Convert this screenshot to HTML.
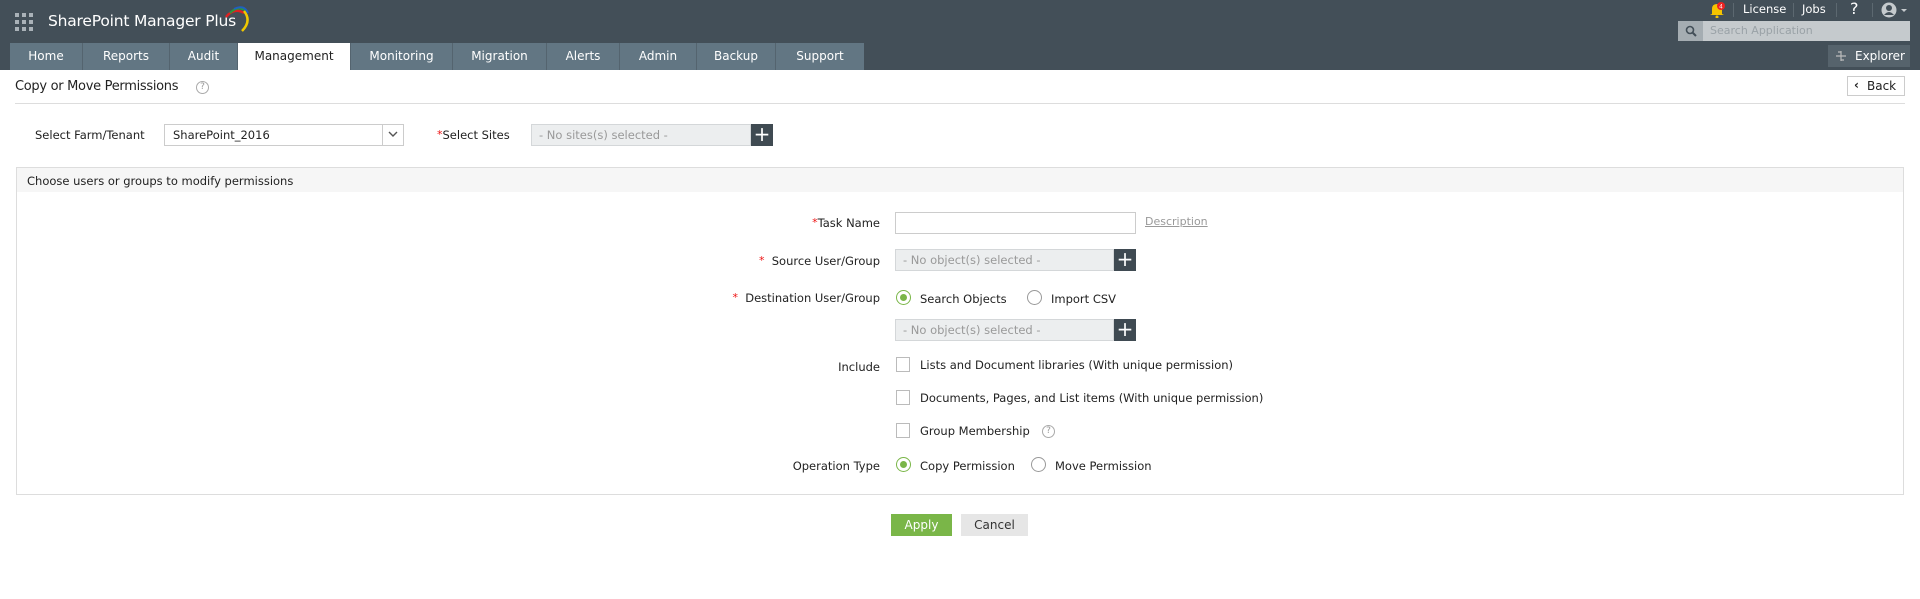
<!DOCTYPE html>
<html><head><meta charset="utf-8"><style>
*{box-sizing:border-box;margin:0;padding:0}
body{width:1920px;height:599px;background:#fff;font-family:"DejaVu Sans","Liberation Sans",sans-serif;font-size:12px;color:#222;position:relative;overflow:hidden}
.a{position:absolute}
.hdr{left:0;top:0;width:1920px;height:70px;background:#434f58}
.tab{position:absolute;top:43px;height:27px;background:#627683;color:#fff;font-size:12px;line-height:27px;text-align:center;border-right:1px solid #54646f}
.tab.act{background:#fff;color:#222}
.lbl{position:absolute;font-size:11.5px;white-space:nowrap}
.r{text-align:right;width:300px}
.star{color:#e11;font-size:11px;vertical-align:top}
.box{position:absolute;height:22px;background:#eceeef;border:1px solid #d4d7d9;color:#999;font-size:11.5px;line-height:20px;padding-left:7px}
.plus{position:absolute;width:22px;height:22px;background:#3f4a52;color:#fff;font-size:20px;line-height:21px;text-align:center}
.radio{position:absolute;width:15px;height:15px;border:1px solid #999;border-radius:50%;background:#fff}
.radio.on{border-color:#7ab648}
.radio.on:after{content:"";position:absolute;left:3px;top:3px;width:7px;height:7px;border-radius:50%;background:#7ab648}
.chk{position:absolute;width:14px;height:15px;border:1px solid #bbb;background:#fff}
.q{position:absolute;width:13px;height:13px;border:1px solid #aaa;border-radius:50%;color:#999;font-size:9px;line-height:11px;text-align:center}
</style></head><body>
<div class="a hdr"></div>
<div class="a" style="left:15px;top:13px;width:18px;height:18px">
<svg width="18" height="18"><g fill="#aab2b8"><rect x="0" y="0" width="4" height="4"/><rect x="7" y="0" width="4" height="4"/><rect x="14" y="0" width="4" height="4"/><rect x="0" y="7" width="4" height="4"/><rect x="7" y="7" width="4" height="4"/><rect x="14" y="7" width="4" height="4"/><rect x="0" y="14" width="4" height="4"/><rect x="7" y="14" width="4" height="4"/><rect x="14" y="14" width="4" height="4"/></g></svg></div>
<div class="a" style="left:48px;top:12px;color:#fff;font-size:15.5px;letter-spacing:-0.2px">SharePoint Manager Plus</div>
<svg class="a" style="left:222px;top:5px" width="30" height="30"><path d="M4 12 Q12 2 22 8" stroke="#d22" stroke-width="2.5" fill="none"/><path d="M8 8 Q16 0 24 6" stroke="#2a9a3a" stroke-width="2" fill="none"/><path d="M12 4 Q22 -1 26 8" stroke="#2060c0" stroke-width="2" fill="none"/><path d="M22 6 Q30 16 20 26" stroke="#f0c800" stroke-width="2.5" fill="none"/></svg>
<div class="tab" style="left:10px;width:73px">Home</div>
<div class="tab" style="left:83px;width:87px">Reports</div>
<div class="tab" style="left:170px;width:68px">Audit</div>
<div class="tab act" style="left:238px;width:113px">Management</div>
<div class="tab" style="left:351px;width:102px">Monitoring</div>
<div class="tab" style="left:453px;width:94px">Migration</div>
<div class="tab" style="left:547px;width:73px">Alerts</div>
<div class="tab" style="left:620px;width:77px">Admin</div>
<div class="tab" style="left:697px;width:79px">Backup</div>
<div class="tab" style="left:776px;width:88px;border:none">Support</div>
<svg class="a" style="left:1709px;top:2px" width="16" height="16"><path d="M3 12 L3 7 Q3 2 8 2 Q13 2 13 7 L13 12 L15 13 L1 13 Z" fill="#f5c400"/><circle cx="8" cy="15" r="1.5" fill="#f5c400"/><circle cx="12" cy="4" r="4" fill="#e22"/><text x="10.2" y="6.5" font-size="6" fill="#fff" font-family="Liberation Sans">4</text></svg>
<div class="a" style="left:1733px;top:3px;width:1px;height:14px;background:#5c6870"></div>
<div class="a" style="left:1743px;top:2px;color:#fff;font-size:11.5px">License</div>
<div class="a" style="left:1793px;top:3px;width:1px;height:14px;background:#5c6870"></div>
<div class="a" style="left:1802px;top:2px;color:#fff;font-size:11.5px">Jobs</div>
<div class="a" style="left:1836px;top:3px;width:1px;height:14px;background:#5c6870"></div>
<div class="a" style="left:1850px;top:-1px;color:#fff;font-size:16px">?</div>
<div class="a" style="left:1872px;top:3px;width:1px;height:14px;background:#5c6870"></div>
<svg class="a" style="left:1881px;top:2px" width="34" height="16"><circle cx="8" cy="8" r="7.5" fill="#c5cacd"/><circle cx="8" cy="6" r="3" fill="#434f58"/><path d="M3 13 Q8 7 13 13" fill="#434f58"/><path d="M20 7 L26 7 L23 10Z" fill="#c5cacd"/></svg>
<div class="a" style="left:1678px;top:21px;width:232px;height:20px;background:#c5cacd"></div>
<div class="a" style="left:1678px;top:21px;width:25px;height:20px;background:#a5adb2"></div>
<svg class="a" style="left:1685px;top:25px" width="12" height="12"><circle cx="5" cy="5" r="3.5" stroke="#434f58" stroke-width="1.6" fill="none"/><path d="M7.5 7.5 L11 11" stroke="#434f58" stroke-width="2"/></svg>
<div class="a" style="left:1710px;top:24px;color:#9aa2a7;font-size:11px">Search Application</div>
<div class="a" style="left:1828px;top:45px;width:82px;height:22px;background:#56636c"></div>
<svg class="a" style="left:1834px;top:49px" width="14" height="14"><path d="M2 7 H12 M7 2 V12 M4 3 H7 M7 11 H10" stroke="#bbb" stroke-width="1.2" fill="none"/></svg>
<div class="a" style="left:1855px;top:49px;color:#fff;font-size:12px">Explorer</div>
<div class="a" style="left:15px;top:79px;font-size:13px;letter-spacing:-0.3px">Copy or Move Permissions</div>
<div class="q" style="left:196px;top:81px">?</div>
<div class="a" style="left:15px;top:103px;width:1890px;height:1px;background:#ddd"></div>
<div class="a" style="left:1847px;top:76px;width:58px;height:20px;border:1px solid #ccc;background:#fff;font-size:12px;line-height:18px;padding-left:19px">Back</div>
<div class="a" style="left:1854px;top:78px;font-size:12px;font-weight:bold">&#x2039;</div>
<div class="lbl" style="left:35px;top:128px">Select Farm/Tenant</div>
<div class="a" style="left:164px;top:124px;width:240px;height:22px;border:1px solid #ccc;font-size:11.5px;line-height:20px;padding-left:8px">SharePoint_2016</div>
<div class="a" style="left:382px;top:125px;width:1px;height:20px;background:#ccc"></div>
<svg class="a" style="left:388px;top:131px" width="10" height="8"><path d="M1 1 L5 5 L9 1" stroke="#555" stroke-width="1.4" fill="none"/></svg>
<div class="lbl" style="left:437px;top:128px"><span class="star">*</span>Select Sites</div>
<div class="box" style="left:531px;top:124px;width:220px">- No sites(s) selected -</div>
<div class="plus" style="left:751px;top:124px">+</div>
<div class="a" style="left:16px;top:167px;width:1888px;height:328px;border:1px solid #ddd"></div>
<div class="a" style="left:17px;top:168px;width:1886px;height:24px;background:#f6f6f6"></div>
<div class="lbl" style="left:27px;top:174px">Choose users or groups to modify permissions</div>
<div class="lbl r" style="left:580px;top:216px"><span class="star">*</span>Task Name</div>
<div class="a" style="left:895px;top:212px;width:241px;height:22px;border:1px solid #ccc"></div>
<div class="lbl" style="left:1145px;top:215px;color:#999;text-decoration:underline;font-size:11px">Description</div>
<div class="lbl r" style="left:580px;top:254px"><span class="star">*</span>&nbsp; Source User/Group</div>
<div class="box" style="left:895px;top:249px;width:219px">- No object(s) selected -</div>
<div class="plus" style="left:1114px;top:249px">+</div>
<div class="lbl r" style="left:580px;top:291px"><span class="star">*</span>&nbsp; Destination User/Group</div>
<div class="radio on" style="left:896px;top:290px"></div>
<div class="lbl" style="left:920px;top:292px">Search Objects</div>
<div class="radio" style="left:1027px;top:290px"></div>
<div class="lbl" style="left:1051px;top:292px">Import CSV</div>
<div class="box" style="left:895px;top:319px;width:219px">- No object(s) selected -</div>
<div class="plus" style="left:1114px;top:319px">+</div>
<div class="lbl r" style="left:580px;top:360px">Include</div>
<div class="chk" style="left:896px;top:357px"></div>
<div class="lbl" style="left:920px;top:358px">Lists and Document libraries (With unique permission)</div>
<div class="chk" style="left:896px;top:390px"></div>
<div class="lbl" style="left:920px;top:391px">Documents, Pages, and List items (With unique permission)</div>
<div class="chk" style="left:896px;top:423px"></div>
<div class="lbl" style="left:920px;top:424px">Group Membership</div>
<div class="q" style="left:1042px;top:425px">?</div>
<div class="lbl r" style="left:580px;top:459px">Operation Type</div>
<div class="radio on" style="left:896px;top:457px"></div>
<div class="lbl" style="left:920px;top:459px">Copy Permission</div>
<div class="radio" style="left:1031px;top:457px"></div>
<div class="lbl" style="left:1055px;top:459px">Move Permission</div>
<div class="a" style="left:891px;top:514px;width:61px;height:22px;background:#7ab648;color:#fff;font-size:12px;line-height:22px;text-align:center">Apply</div>
<div class="a" style="left:961px;top:514px;width:67px;height:22px;background:#e6e6e6;color:#333;font-size:12px;line-height:22px;text-align:center">Cancel</div>
</body></html>
